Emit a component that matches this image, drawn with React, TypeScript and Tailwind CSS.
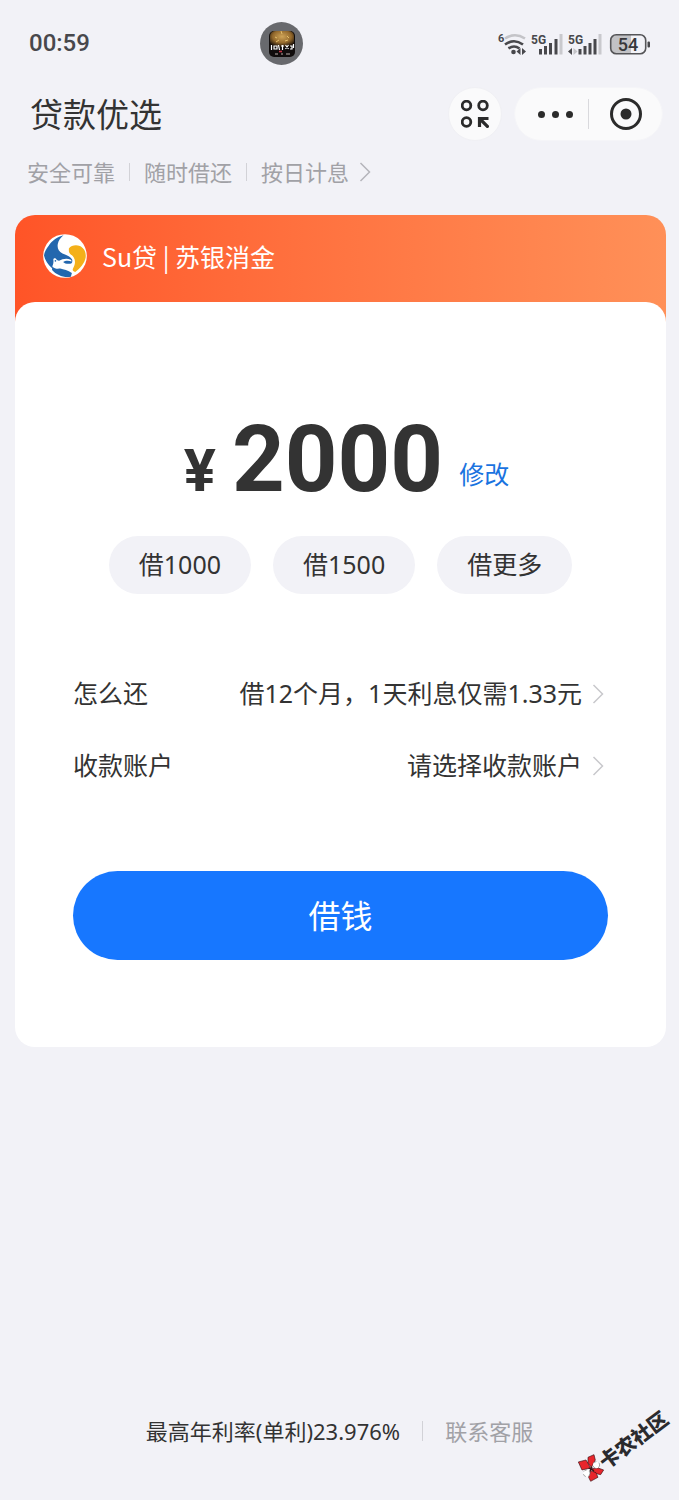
import React from 'react';

const quickAmounts = ['借1000', '借1500', '借更多'];

const details = [
  { label: '怎么还', value: '借12个月，1天利息仅需1.33元' },
  { label: '收款账户', value: '请选择收款账户' },
];

const features = ['安全可靠', '随时借还', '按日计息'];

const Chevron: React.FC<{ className?: string }> = ({ className = '' }) => (
  <svg viewBox="0 0 12 20" className={`h-5 w-3 shrink-0 ${className}`} fill="none" stroke="currentColor" strokeWidth="1.5" aria-hidden="true">
    <path d="M1.5 1 L10.5 10 L1.5 19" />
  </svg>
);

const StatusIcons: React.FC = () => (
  <svg viewBox="0 0 170 45" className="h-[45px] w-[170px]" aria-hidden="true">
    <g fontFamily="Roboto, sans-serif" fontWeight="700" fill="#48484c">
      <text x="8" y="21" fontSize="11">6</text>
      <text x="41" y="23" fontSize="12">5G</text>
      <text x="78" y="23" fontSize="12">5G</text>
    </g>
    {/* wifi */}
    <g fill="none" strokeWidth="2.6">
      <path d="M15 17.5 Q25 11 35 17.5" stroke="#c4c4c8" />
      <path d="M15 23.5 Q24 17 33 23.5" stroke="#48484c" />
      <path d="M18.5 27.5 Q24 23.5 29.5 27.5" stroke="#48484c" />
    </g>
    <circle cx="23.5" cy="31" r="2.3" fill="#48484c" />
    <path d="M30.5 27 v7 l-4 -3.5z M32 27 v7 l4 -3.5z" fill="#48484c" />
    {/* first sim */}
    <path d="M49 28h3v5.5h-3z M54 25h3v8.5h-3z M59 22h3v11.5h-3z M64.5 18h3v15.5h-3z" fill="#48484c" />
    <path d="M69.5 13h3v20.5h-3z" fill="#c9c9cd" />
    {/* second sim */}
    <path d="M82 27v7l-4 -3.5z" fill="#48484c" />
    <path d="M83.5 27v7l4 -3.5z" fill="#c4c4c8" />
    <path d="M88.5 28h3v5.5h-3z M93.5 25h3v8.5h-3z M98.5 22h3v11.5h-3z M103.5 18h3v15.5h-3z" fill="#48484c" />
    <path d="M108.5 13h3v20.5h-3z" fill="#c9c9cd" />
    {/* battery */}
    <path d="M126 14h15v19h-15a5 5 0 0 1-5-5v-9a5 5 0 0 1 5-5z" fill="#c2c2c5" />
    <rect x="120.7" y="13.7" width="35" height="19" rx="5.5" fill="none" stroke="#555558" strokeWidth="1.6" />
    <rect x="157.5" y="20.5" width="2.5" height="6" rx="1" fill="#48484c" />
    <text x="138" y="29.5" fontSize="18" fontWeight="500" textAnchor="middle" fontFamily="Roboto, sans-serif" fill="#38383b">54</text>
  </svg>
);

const AppBadge: React.FC = () => (
  <svg viewBox="0 0 43 43" className="ml-[168px] h-[43px] w-[43px]" aria-hidden="true">
    <defs>
      <radialGradient id="glow" cx="50%" cy="35%" r="65%">
        <stop offset="0" stopColor="#cfa458" />
        <stop offset="0.6" stopColor="#94692c" />
        <stop offset="1" stopColor="#1c120b" />
      </radialGradient>
    </defs>
    <circle cx="21.5" cy="21.5" r="21.5" fill="#68696d" />
    <rect x="9" y="9" width="26" height="26" rx="5" fill="#100c0c" />
    <rect x="10" y="9" width="24" height="16" rx="5" fill="url(#glow)" />
    <path d="M21 9l1 3M15 15l2 1M27 14l2 2M16 20l3-2M25 19l3-1" stroke="#e3be6c" strokeWidth="1" />
    <path d="M11.5 23v5M14 24h3v3h-3zM18.5 23l1 5M21 24h3M22.5 23v5M25.5 23l3 4M28.5 23l-3 4M30 24h2v3h-2M33.5 22v4" fill="none" stroke="#fff" strokeWidth="1.2" />
    <path d="M19 29.5h3" stroke="#c73345" strokeWidth="1.6" />
    <path d="M15 32h3M21 32h2M26 32h4" stroke="#b8aca8" strokeWidth="1" />
  </svg>
);

const BankLogo: React.FC = () => (
  <svg viewBox="0 0 131 131" className="h-11 w-11 shrink-0" aria-hidden="true">
    <circle cx="65.5" cy="65.5" r="65" fill="#fff" />
    <path d="M61 4C44 8 27 20 17 35C10 44 4 55 3 64C6 78 15 91 26 101C29 94 32 87 31 79C30 73 33 71 38 73C40 76 43 79 48 80C58 74 71 71 83 77C84 79 85 80 85 82C76 78 66 79 60 83C64 88 74 90 84 88C87 85 88 82 87 77C83 68 72 63 58 58C46 51 42 42 44 30C46 20 52 11 61 4Z" fill="#2367ae" />
    <path d="M27 96C34 104 43 104 51 103C62 105 74 109 86 116L83 127C62 131 40 122 27 107Z" fill="#2367ae" />
    <circle cx="37" cy="80" r="2.5" fill="#2367ae" />
    <path d="M77 43C84 34 98 31 110 36C122 42 129 54 127 70C124 87 111 102 96 113C88 111 87 107 90 101C96 90 97 80 92 71C87 61 78 60 77 51Z" fill="#f4b019" />
  </svg>
);

const Watermark: React.FC = () => (
  <svg viewBox="0 0 119 110" className="pointer-events-none absolute right-0 bottom-0 h-[110px] w-[119px]" aria-label="卡农社区">
    <g transform="translate(14 50) scale(0.333)">
      <g fill="#e8262c" stroke="#3c1216" strokeWidth="2">
        <path d="M13 66L36 60L50 84L24 90Z" />
        <path d="M42 52L60 44L64 60L52 82L42 68Z" />
        <path d="M52 86L72 84L89 90L80 104L62 100Z" />
        <path d="M50 92L66 98L72 112L50 124L44 112Z" />
      </g>
      <circle cx="67" cy="75" r="10" fill="#fff" stroke="#777" strokeWidth="2" strokeDasharray="10 8" />
      <circle cx="38" cy="100" r="10" fill="#fff" stroke="#777" strokeWidth="2" strokeDasharray="10 8" />
      <path d="M44 84l16 8M48 94l6-14" stroke="#3c1216" strokeWidth="4" />
    </g>
    <text transform="translate(46 80) rotate(-37)" fontSize="20" fontWeight="900" fontFamily="'Noto Sans CJK SC', sans-serif" fill="#2b2b2e">卡农社区</text>
  </svg>
);

const App: React.FC = () => (
  <div className="relative flex min-h-screen flex-col bg-[#f2f2f7] font-['Noto_Sans','Noto_Sans_CJK_SC',sans-serif] text-[#333333]">
    <div className="flex h-[86px] items-center pr-[19px] pl-[29px]">
      <time className="w-[63px] font-[Roboto,sans-serif] text-2xl font-medium text-[#48484c]">00:59</time>
      <AppBadge />
      <div className="ml-auto">
        <StatusIcons />
      </div>
    </div>

    <header>
      <div className="flex h-14 items-center pr-4 pl-[30px]">
        <h1 className="text-[33px] leading-none">贷款优选</h1>
        <button aria-label="小组件" className="mr-3 ml-auto flex size-[54px] items-center justify-center rounded-full border border-[#f0f0f4] bg-[#fafafb]">
          <svg viewBox="0 0 28 28" className="size-7" fill="none" stroke="#2b2b2b" strokeWidth="2.8" aria-hidden="true">
            <circle cx="5.5" cy="5.5" r="4.3" />
            <circle cx="22" cy="5.5" r="4.3" />
            <circle cx="5.5" cy="22" r="4.3" />
            <path d="M18.5 27V18.5H27.5M19 19L27.5 27.5" strokeWidth="3.2" />
          </svg>
        </button>
        <div className="flex h-[54px] w-[149px] items-center rounded-full border border-[#f5f5f8] bg-[#fafafb]">
          <button aria-label="更多" className="flex h-full w-[73px] items-center justify-end gap-[7px] pr-[15px]">
            <span className="size-[7px] rounded-full bg-[#2b2b2b]" />
            <span className="size-[7px] rounded-full bg-[#2b2b2b]" />
            <span className="size-[7px] rounded-full bg-[#2b2b2b]" />
          </button>
          <span className="h-[30px] w-px bg-[#d9d9dd]" />
          <button aria-label="关闭" className="flex h-full flex-1 items-center justify-center">
            <svg viewBox="0 0 32 32" className="size-8" aria-hidden="true">
              <circle cx="16" cy="16" r="14.5" fill="none" stroke="#2b2b2b" strokeWidth="3" />
              <circle cx="16" cy="16" r="5.5" fill="#2b2b2b" />
            </svg>
          </button>
        </div>
      </div>

      <a href="#features" className="mt-3 flex h-9 items-center pl-[27px] text-[22px] leading-8 text-[#a1a1a6]">
        {features.map((f, i) => (
          <React.Fragment key={f}>
            {i > 0 && <span className="mx-3.5 h-[18px] w-px bg-[#d2d2d7]" />}
            <span>{f}</span>
          </React.Fragment>
        ))}
        <Chevron className="ml-2.5 text-[#b5b5ba]" />
      </a>
    </header>

    <main className="mt-[25px] mr-[13px] ml-[15px]">
      <div className="flex h-[110px] items-start rounded-t-[20px] bg-linear-to-r from-[#ff5427] to-[#ff9058] pt-[19px] pl-7 text-white">
        <BankLogo />
        <h2 className="ml-[15px] font-['Noto_Sans_CJK_SC',sans-serif] text-[25px] leading-[44px]">Su贷 | 苏银消金</h2>
      </div>

      <section className="-mt-[23px] rounded-[20px] bg-white px-[58px] pt-[108px] pb-[87px]">
        <div className="flex h-[100px] items-end justify-center pl-3">
          <div className="flex items-baseline font-[Roboto,sans-serif] font-bold">
            <span className="text-[60px] leading-none">¥</span>
            <span className="ml-4 text-[92px] leading-[100px]">2000</span>
          </div>
          <button className="mb-[18px] ml-4 text-[25px] leading-9 text-[#1a73e0]">修改</button>
        </div>

        <div className="mt-[26px] flex justify-center gap-[22px]">
          {quickAmounts.map((a) => (
            <button key={a} className="h-[58px] rounded-full bg-[#f2f2f7] px-[30px] text-[25px]">
              {a}
            </button>
          ))}
        </div>

        <div className="mt-16">
          {details.map((d) => (
            <button key={d.label} className="flex h-[72px] w-full items-center text-[25px]">
              <span>{d.label}</span>
              <span className="ml-auto">{d.value}</span>
              <Chevron className="mr-1 ml-2.5 text-[#c8c8cc]" />
            </button>
          ))}
        </div>

        <button className="mt-[69px] h-[89px] w-full rounded-full bg-[#1777ff] text-[32px] text-white">借钱</button>
      </section>
    </main>

    <footer className="mt-auto mb-[51px] flex h-9 items-center justify-center text-[22px] leading-8">
      <span>最高年利率(单利)23.976%</span>
      <span className="mx-[22px] h-5 w-px bg-[#d2d2d7]" />
      <a href="#service" className="text-[#a1a1a6]">联系客服</a>
    </footer>

    <Watermark />
  </div>
);

export default App;
